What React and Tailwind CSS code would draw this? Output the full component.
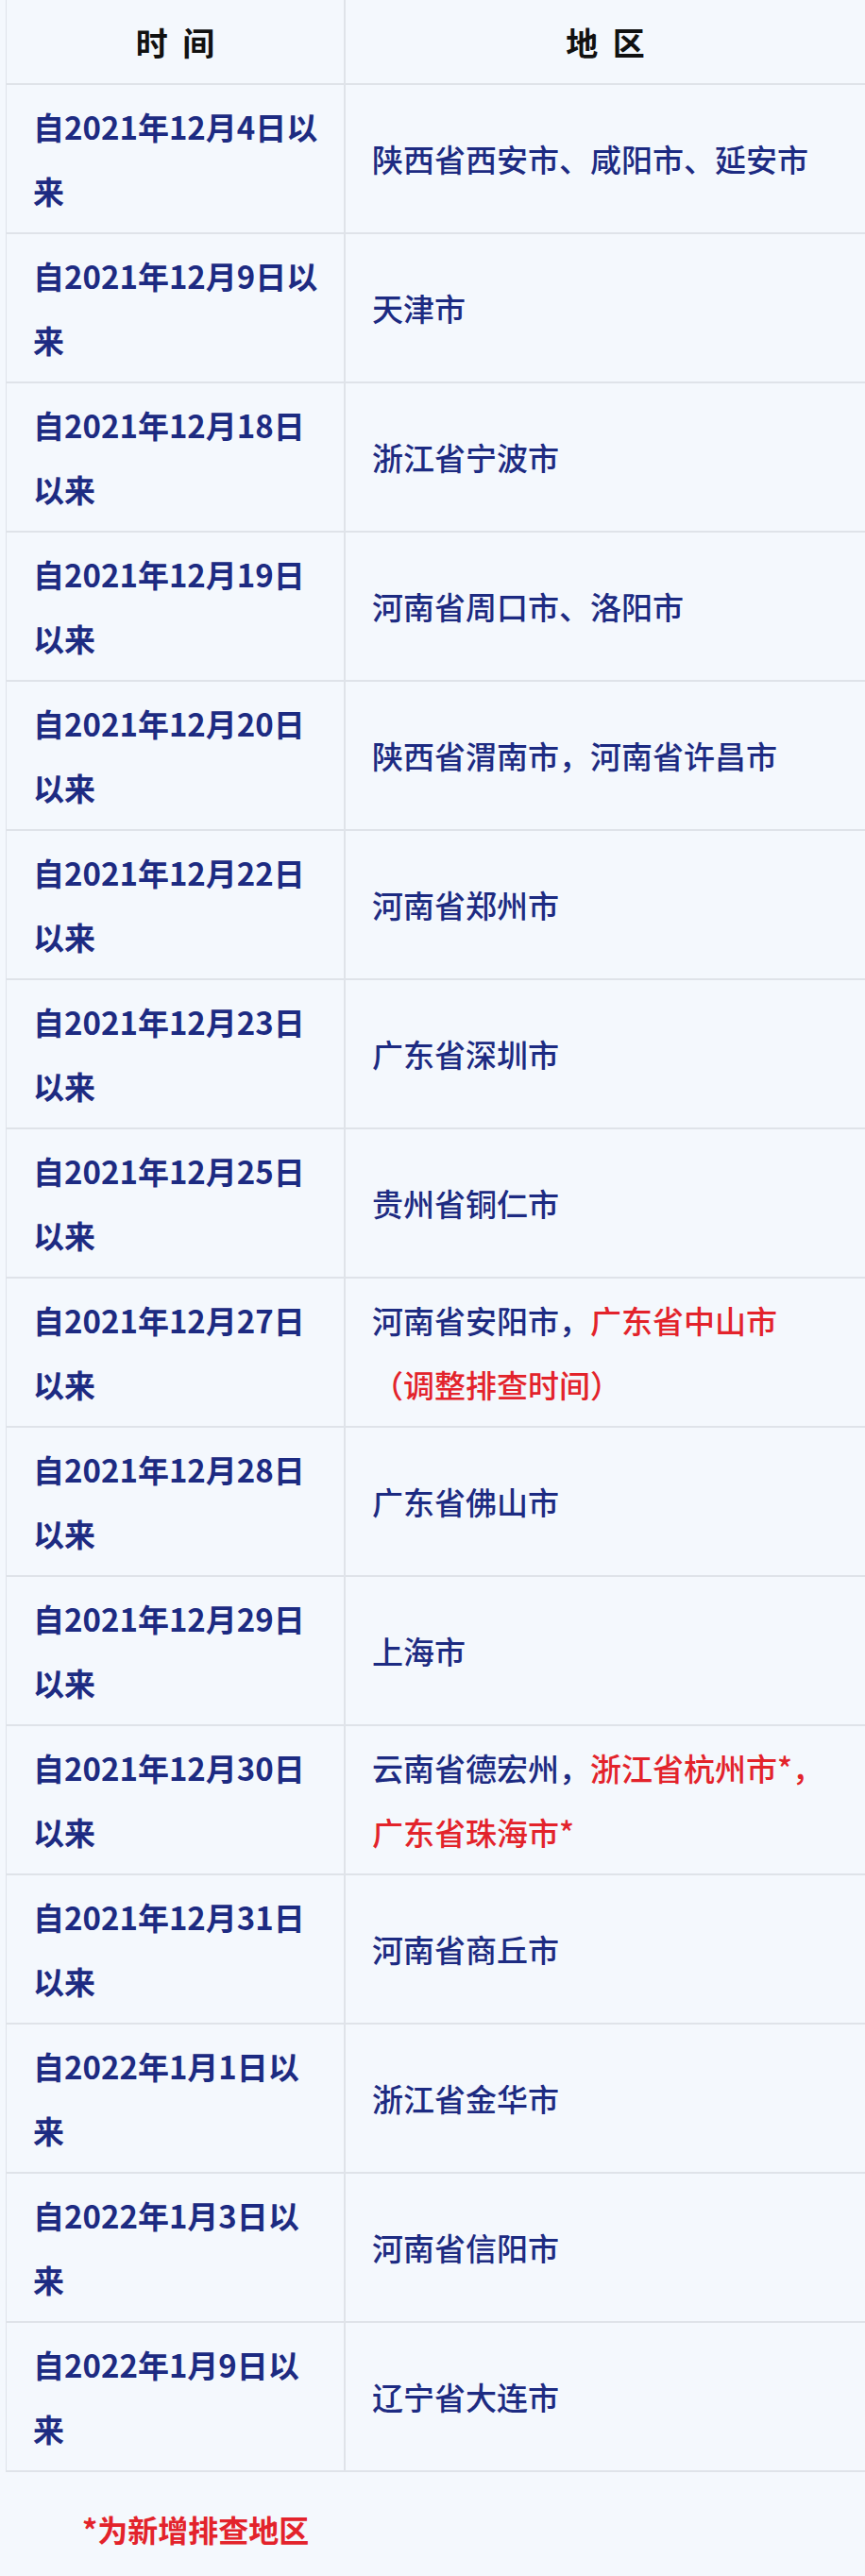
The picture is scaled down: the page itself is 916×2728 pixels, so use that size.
import React from 'react';

const ROWS = [
  { date: '自2021年12月4日以来', area: [{ t: '陕西省西安市、咸阳市、延安市' }] },
  { date: '自2021年12月9日以来', area: [{ t: '天津市' }] },
  { date: '自2021年12月18日以来', area: [{ t: '浙江省宁波市' }] },
  { date: '自2021年12月19日以来', area: [{ t: '河南省周口市、洛阳市' }] },
  { date: '自2021年12月20日以来', area: [{ t: '陕西省渭南市，河南省许昌市' }] },
  { date: '自2021年12月22日以来', area: [{ t: '河南省郑州市' }] },
  { date: '自2021年12月23日以来', area: [{ t: '广东省深圳市' }] },
  { date: '自2021年12月25日以来', area: [{ t: '贵州省铜仁市' }] },
  { date: '自2021年12月27日以来', area: [{ t: '河南省安阳市，' }, { t: '广东省中山市', red: true }, { br: true }, { t: '（调整排查时间）', red: true }] },
  { date: '自2021年12月28日以来', area: [{ t: '广东省佛山市' }] },
  { date: '自2021年12月29日以来', area: [{ t: '上海市' }] },
  { date: '自2021年12月30日以来', area: [{ t: '云南省德宏州，' }, { t: '浙江省杭州市*，', red: true }, { br: true }, { t: '广东省珠海市*', red: true }] },
  { date: '自2021年12月31日以来', area: [{ t: '河南省商丘市' }] },
  { date: '自2022年1月1日以来', area: [{ t: '浙江省金华市' }] },
  { date: '自2022年1月3日以来', area: [{ t: '河南省信阳市' }] },
  { date: '自2022年1月9日以来', area: [{ t: '辽宁省大连市' }] },
];

const font = { fontFamily: '"Noto Sans CJK SC", "Noto Sans", sans-serif' };

export default function App() {
  return (
    <div className="w-[916px] h-[2728px] bg-[#f4f8fd] pl-[6px]" style={font}>
      {/* Table */}
      <div className="border-l border-[#dfe3e9]">
        <div className="grid grid-cols-[359px_1fr] h-[90px] border-b-2 border-[#dfe3e9]">
          <div className="flex items-center justify-center border-r-2 border-[#dfe3e9] text-[34px] font-bold text-[#111]">
            时&nbsp;&nbsp;间
          </div>
          <div className="flex items-center justify-center text-[34px] font-bold text-[#111]">
            地&nbsp;&nbsp;区
          </div>
        </div>
        {ROWS.map((r) => (
          <div key={r.date} className="grid grid-cols-[359px_1fr] h-[158px] border-b-2 border-[#dfe3e9]">
            <div className="flex items-center border-r-2 border-[#dfe3e9] pl-[28px] pr-[20px] text-[33px] leading-[68px] font-bold text-[#1d2b82]">
              <p>{r.date}</p>
            </div>
            <div className="flex items-center pl-[28px] pr-[20px] text-[33px] leading-[68px] font-medium text-[#1d2b82]">
              <p>
                {r.area.map((a, i) =>
                  a.br ? <br key={i} /> : (
                    <span key={i} className={a.red ? 'text-[#e3232b]' : ''}>{a.t}</span>
                  )
                )}
              </p>
            </div>
          </div>
        ))}
      </div>

      {/* Footnote */}
      <p className="pl-[81px] pt-[34px] text-[32px] leading-[52px] font-bold text-[#e3232b]">*为新增排查地区</p>
    </div>
  );
}
